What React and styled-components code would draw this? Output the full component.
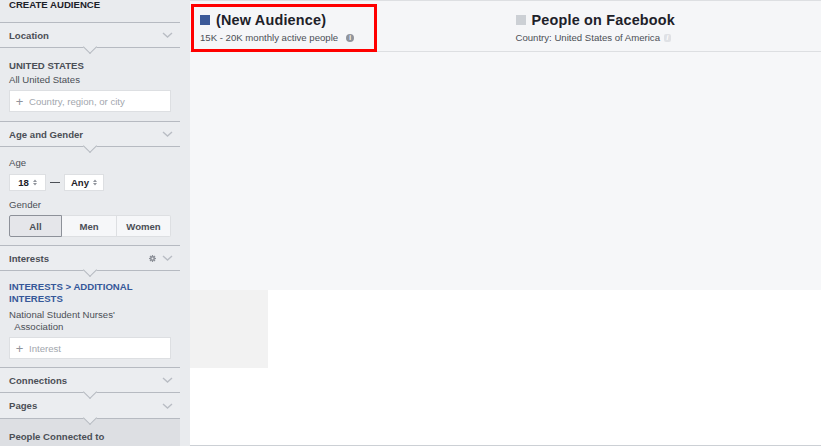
import React from 'react';
import styled, { createGlobalStyle } from 'styled-components';

const GlobalStyle = createGlobalStyle`
	html, body {
		margin: 0;
		padding: 0;
		background: #e9ebee;
		font-family: "Liberation Sans", Arial, Helvetica, sans-serif;
		color: #4b4f56;
		overflow: hidden;
	}
	* {
		box-sizing: border-box;
	}
`;

const Page = styled.div`
	display: flex;
	width: 821px;
	height: 446px;
`;

const Sidebar = styled.aside`
	width: 180px;
	flex: none;
	display: flex;
	flex-direction: column;
	height: 100%;
`;

const Title = styled.div`
	height: 22px;
	padding: 0 9px;
	font-size: 9.6px;
	font-weight: bold;
	line-height: 10px;
	color: #1d2129;
`;

const SectionHeader = styled.div`
	position: relative;
	display: flex;
	align-items: center;
	height: 26px;
	padding: 0 9px;
	border-top: ${(props) => (props.noTop ? 'none' : '1px solid #b6bac1')};
	border-bottom: 1px solid #b6bac1;
	background: #ebedf0;
	font-size: 9.6px;
	font-weight: bold;
	color: #4b4f56;

	&::after {
		content: '';
		position: absolute;
		left: 85px;
		bottom: -5px;
		width: 9px;
		height: 9px;
		background: #ebedf0;
		border-right: 1px solid #b6bac1;
		border-bottom: 1px solid #b6bac1;
		transform: rotate(45deg);
		z-index: 1;
	}
`;

const HeaderLabel = styled.span`
	flex: 1;
`;

const HeaderIcons = styled.span`
	display: flex;
	align-items: center;
	gap: 6px;
	margin-right: -2px;
`;

const SectionBody = styled.div`
	padding: ${(props) => props.pad || '12px 9px 9px'};
	display: flex;
	flex-direction: column;
`;

const Heading = styled.div`
	font-size: 9.6px;
	font-weight: bold;
	line-height: 12px;
	color: ${(props) => (props.link ? '#365899' : '#4b4f56')};
`;

const Text = styled.div`
	font-size: 9.6px;
	line-height: 12px;
	margin-top: ${(props) => props.mt || 0}px;
	color: #4b4f56;
	white-space: pre-wrap;
`;

const Label = styled.div`
	font-size: 9.6px;
	line-height: 12px;
	margin-top: ${(props) => props.mt || 0}px;
	color: #4b4f56;
`;

const Field = styled.label`
	display: flex;
	align-items: center;
	height: 22px;
	margin-top: 4px;
	padding: 0 4px;
	background: #fff;
	border: 1px solid #dddfe2;
`;

const Plus = styled.span`
	font-size: 13px;
	color: #90949c;
	width: 11px;
	text-align: center;
	line-height: 1;
	margin-right: 4px;
`;

const Input = styled.input`
	flex: 1;
	min-width: 0;
	border: none;
	outline: none;
	background: transparent;
	padding: 0;
	font-family: inherit;
	font-size: 9.6px;
	color: #1d2129;

	&::placeholder {
		color: #a3a7ae;
	}
`;

const AgeRow = styled.div`
	display: flex;
	align-items: center;
	margin-top: 5px;
	gap: 4px;
`;

const Select = styled.div`
	display: flex;
	align-items: center;
	justify-content: center;
	gap: 4px;
	width: ${(props) => props.w}px;
	height: 17px;
	background: #fff;
	border: 1px solid #dddfe2;
	font-size: 9.6px;
	font-weight: bold;
	color: #1d2129;
`;

const Dash = styled.span`
	width: 10px;
	height: 1px;
	background: #4b4f56;
`;

const Segmented = styled.div`
	display: grid;
	grid-template-columns: 53px 55px 54px;
	height: 22px;
	margin-top: 4px;
`;

const Segment = styled.button`
	font-family: inherit;
	font-size: 9.6px;
	font-weight: bold;
	color: #4b4f56;
	padding: 0;
	margin: 0;
	background: ${(props) => (props.active ? '#e5e6ea' : '#f6f7f9')};
	border: 1px solid ${(props) => (props.active ? '#8d9199' : '#dddfe2')};
	border-left-width: ${(props) => (props.first || props.active ? '1px' : '0')};
	border-radius: ${(props) =>
		props.first ? '2px 0 0 2px' : props.last ? '0 2px 2px 0' : '0'};
`;

const Footer = styled.div`
	flex: 1;
	background: #dddfe3;
	padding: 12px 9px 0;
	font-size: 9.6px;
	font-weight: bold;
	color: #4b4f56;
	line-height: 12px;
`;

const Main = styled.main`
	flex: 1;
	margin-left: 10px;
	display: flex;
	flex-direction: column;
	background: #fff;
	border-top: 1px solid #dddfe2;
	border-bottom: 1px solid #ccd0d5;
	height: 446px;
`;

const Header = styled.header`
	display: grid;
	grid-template-columns: 1fr 1fr;
	height: 51px;
	background: #f5f6f8;
	border-bottom: 1px solid #dddfe2;
`;

const Column = styled.div`
	align-self: start;
	justify-self: start;
	margin: 3px 0 0 1px;
	padding: 4px 20px 4px 6px;
	border: 3px solid ${(props) => (props.highlight ? '#ff0000' : 'transparent')};
	height: 48px;
`;

const TitleRow = styled.div`
	display: flex;
	align-items: center;
	gap: 6px;
	height: 18px;
`;

const Swatch = styled.span`
	width: 10px;
	height: 10px;
	background: ${(props) => props.color};
	flex: none;
`;

const AudienceName = styled.h2`
	margin: 0;
	font-size: 14.4px;
	font-weight: bold;
	letter-spacing: 0.2px;
	color: #1d2129;
`;

const Meta = styled.div`
	display: flex;
	align-items: center;
	gap: 4px;
	margin-top: 3px;
	font-size: 9.6px;
	color: #4b4f56;
	white-space: nowrap;
`;

const Info = styled.span`
	display: inline-flex;
	align-items: center;
	justify-content: center;
	width: ${(props) => (props.faint ? 7 : 8)}px;
	height: 8px;
	border-radius: ${(props) => (props.faint ? '2px' : '50%')};
	background: ${(props) => (props.faint ? '#dfe1e5' : '#90949c')};
	color: #fff;
	font-size: 6.5px;
	font-weight: bold;
	font-style: ${(props) => (props.faint ? 'italic' : 'normal')};
	margin-left: ${(props) => (props.faint ? '0' : '4px')};
`;

const Canvas = styled.div`
	height: 238px;
	background: #f6f7f9;
`;

const Row = styled.div`
	display: flex;
	height: 78px;
`;

const Cell = styled.div`
	width: ${(props) => props.w}px;
	background: ${(props) => props.bg || '#fff'};
	flex: ${(props) => (props.w ? 'none' : 1)};
`;

const Blank = styled.div`
	flex: 1;
	background: #fff;
`;

const Chevron = () => (
	<svg width="11" height="6" viewBox="0 0 11 6" fill="none">
		<path d="M1 1l4.5 4L10 1" stroke="#b9bdc4" strokeWidth="1.4" />
	</svg>
);

const Gear = () => (
	<svg width="7" height="7" viewBox="0 0 8 8">
		<g fill="#8d9199">
			<circle cx="4" cy="4" r="2.8" />
			<rect x="3.3" y="0" width="1.4" height="8" />
			<rect x="0" y="3.3" width="8" height="1.4" />
			<rect x="3.3" y="0" width="1.4" height="8" transform="rotate(45 4 4)" />
			<rect x="3.3" y="0" width="1.4" height="8" transform="rotate(-45 4 4)" />
		</g>
		<circle cx="4" cy="4" r="1.1" fill="#ebedf0" />
	</svg>
);

const Sort = () => (
	<svg width="4" height="7" viewBox="0 0 4 7">
		<path d="M0 3L2 0.5L4 3z M0 4L2 6.5L4 4z" fill="#90949c" />
	</svg>
);

const Section = ({ label, icons, noTop, children, pad }) => (
	<>
		<SectionHeader noTop={noTop}>
			<HeaderLabel>{label}</HeaderLabel>
			<HeaderIcons>
				{icons}
				<Chevron />
			</HeaderIcons>
		</SectionHeader>
		{children && <SectionBody pad={pad}>{children}</SectionBody>}
	</>
);

export default function App() {
	return (
		<Page>
			<GlobalStyle />
			<Sidebar>
				<Title>CREATE AUDIENCE</Title>
				<Section label="Location">
					<Heading>UNITED STATES</Heading>
					<Text mt={2}>All United States</Text>
					<Field>
						<Plus>+</Plus>
						<Input placeholder="Country, region, or city" />
					</Field>
				</Section>
				<Section label="Age and Gender" pad="10px 9px 8px">
					<Label>Age</Label>
					<AgeRow>
						<Select w={37}>
							18 <Sort />
						</Select>
						<Dash />
						<Select w={40}>
							Any <Sort />
						</Select>
					</AgeRow>
					<Label mt={8}>Gender</Label>
					<Segmented>
						<Segment active first>All</Segment>
						<Segment>Men</Segment>
						<Segment last>Women</Segment>
					</Segmented>
				</Section>
				<Section label="Interests" icons={<Gear />} pad="10px 9px 8px">
					<Heading link>INTERESTS &gt; ADDITIONAL INTERESTS</Heading>
					<Text mt={4}>{"National Student Nurses'\n  Association"}</Text>
					<Field>
						<Plus>+</Plus>
						<Input placeholder="Interest" />
					</Field>
				</Section>
				<Section label="Connections" />
				<Section label="Pages" noTop />
				<Footer>People Connected to</Footer>
			</Sidebar>
			<Main>
				<Header>
					<Column highlight>
						<TitleRow>
							<Swatch color="#3b5998" />
							<AudienceName>(New Audience)</AudienceName>
						</TitleRow>
						<Meta>
							15K - 20K monthly active people
							<Info>i</Info>
						</Meta>
					</Column>
					<Column>
						<TitleRow>
							<Swatch color="#ccd0d5" />
							<AudienceName>People on Facebook</AudienceName>
						</TitleRow>
						<Meta>
							Country: United States of America
							<Info faint>i</Info>
						</Meta>
					</Column>
				</Header>
				<Canvas />
				<Row>
					<Cell w={78} bg="#f2f2f2" />
					<Cell />
				</Row>
				<Blank />
			</Main>
		</Page>
	);
}
